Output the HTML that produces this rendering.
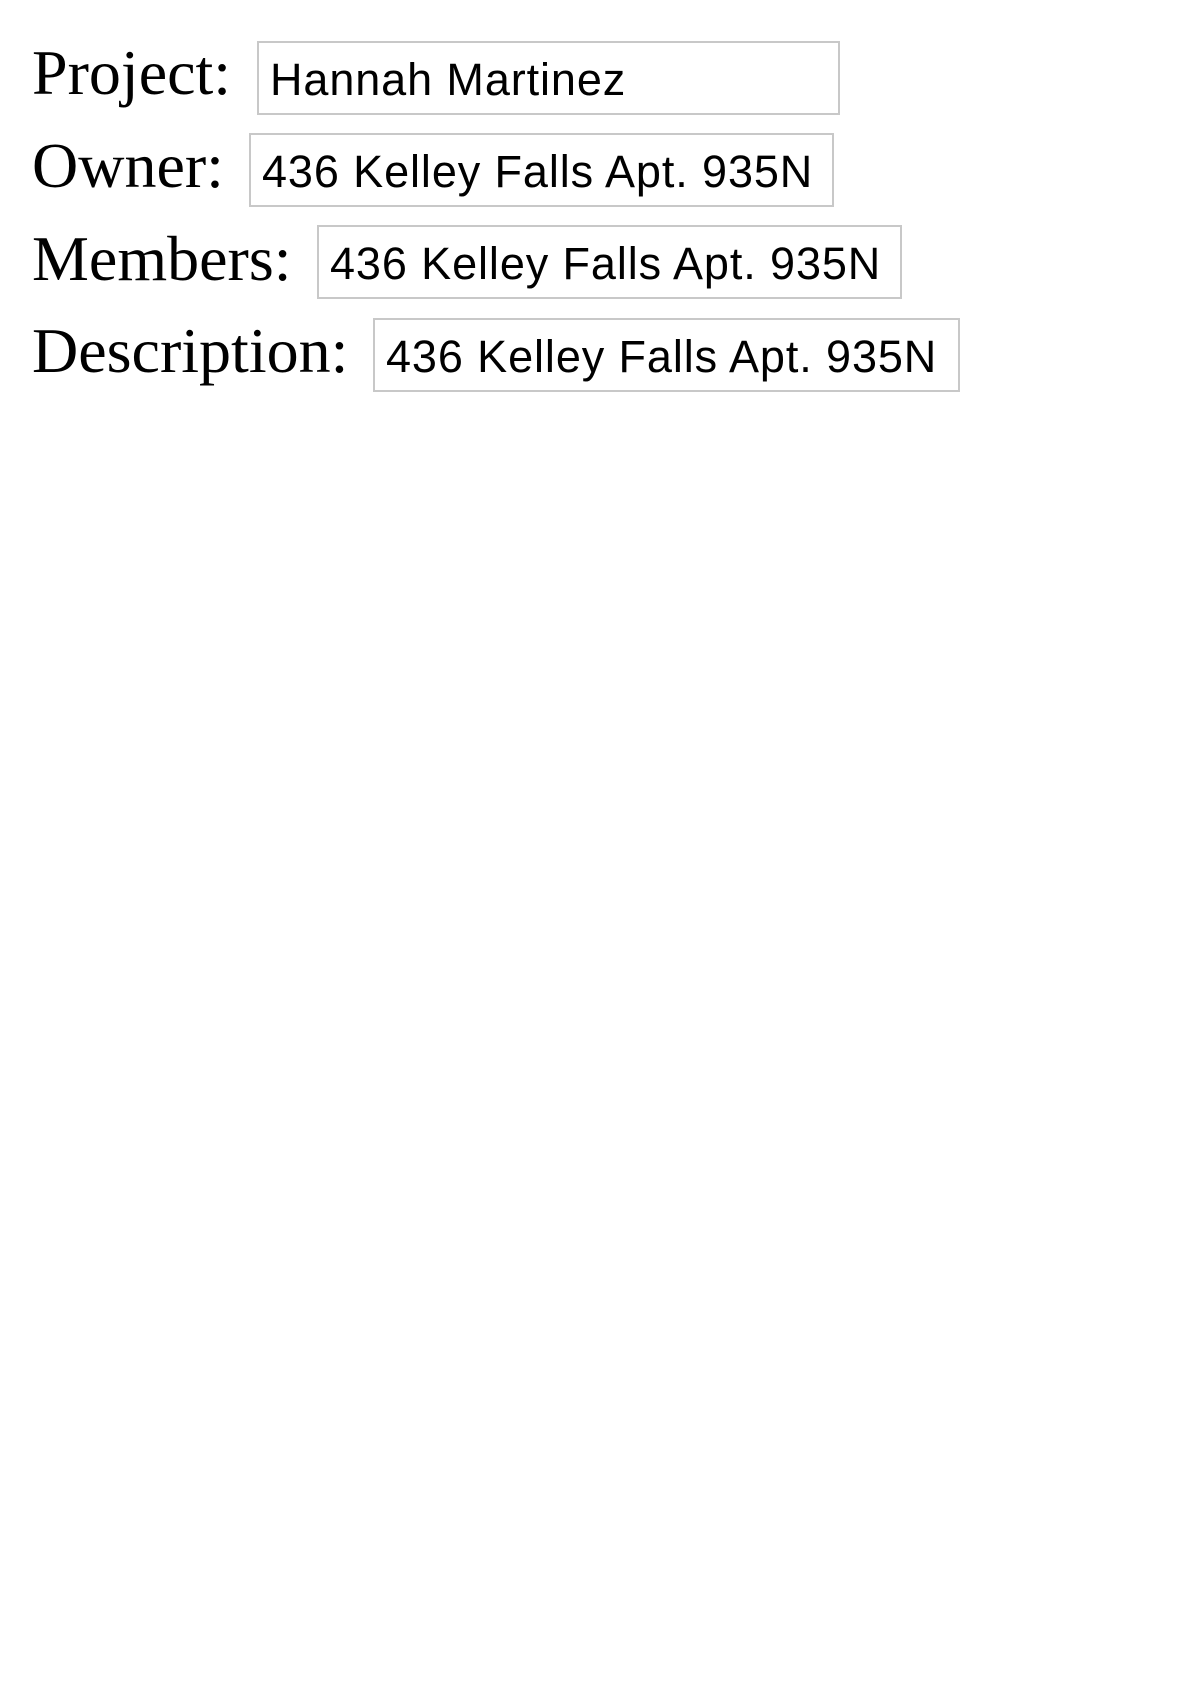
<!DOCTYPE html>
<html><head><meta charset="utf-8"><style>
html,body{margin:0;padding:0;background:#fff;width:1190px;height:1684px;overflow:hidden}
.l{position:absolute;left:32px;font-family:"Liberation Serif",serif;font-size:64px;color:#000;line-height:1;white-space:nowrap}
.i{position:absolute;height:74px;border:2px solid #c8c8c8;box-sizing:border-box;overflow:hidden;white-space:nowrap;font-family:"Liberation Sans",sans-serif;font-size:45px;letter-spacing:0.9px;color:#000;padding-left:11px;line-height:74px}
</style></head><body>
<div class="l" style="top:41px">Project:</div>
<div class="i" style="left:257px;top:41px;width:583px">Hannah Martinez</div>
<div class="l" style="top:134px">Owner:</div>
<div class="i" style="left:249px;top:133px;width:585px">436 Kelley Falls Apt. 935N</div>
<div class="l" style="top:227px">Members:</div>
<div class="i" style="left:317px;top:225px;width:585px">436 Kelley Falls Apt. 935N</div>
<div class="l" style="top:319px">Description:</div>
<div class="i" style="left:373px;top:318px;width:587px">436 Kelley Falls Apt. 935N</div>
</body></html>
